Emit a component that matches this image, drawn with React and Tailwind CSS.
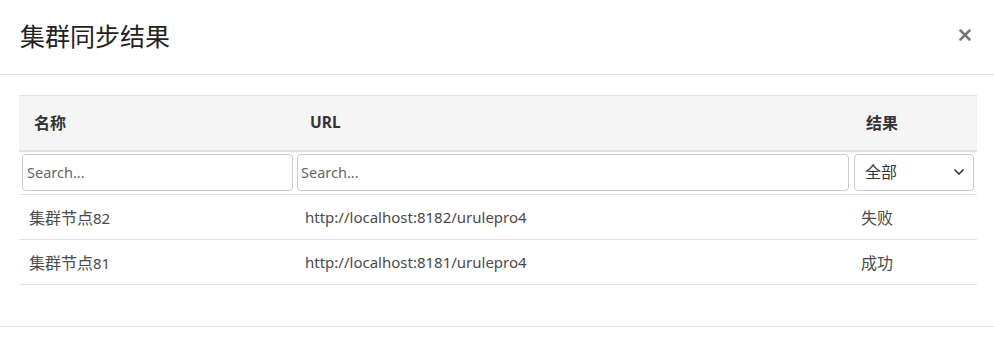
import { X, ChevronDown } from "lucide-react";

const rows = [
  { name: "集群节点", num: "82", url: "http://localhost:8182/urulepro4", result: "失败" },
  { name: "集群节点", num: "81", url: "http://localhost:8181/urulepro4", result: "成功" },
];

export default function App() {
  return (
    <div
      className="w-[994px] h-[353px] bg-white text-[#333] text-[15px] overflow-hidden"
      style={{ fontFamily: '"Noto Sans", "Noto Sans CJK SC", sans-serif' }}
    >
      {/* Header */}
      <div className="h-[75px] flex items-center justify-between pl-[20px] pr-[20px] border-b border-[#e5e5e5]">
        <h4 className="text-[25px] font-normal text-[#222] leading-none -mt-[1px]">集群同步结果</h4>
        <button className="text-[#777] -mt-[5px]">
          <X size={18} strokeWidth={3.4} />
        </button>
      </div>

      {/* Body */}
      <div className="px-[19px] pt-[20px] h-[252px] border-b border-[#e5e5e5]">
        <table className="w-[958px] table-fixed border-collapse">
          <colgroup>
            <col className="w-[276px]" />
            <col className="w-[556px]" />
            <col className="w-[126px]" />
          </colgroup>
          <thead>
            <tr className="bg-[#f5f5f5] border-t border-[#e3e3e3] border-b-2 border-b-[#dde3ea] h-[55px]">
              <th className="text-left font-bold pl-[15px] text-[#333] text-[16px]">名称</th>
              <th className="text-left font-bold pl-[15px] text-[#333] text-[15.5px]">URL</th>
              <th className="text-left font-bold pl-[15px] text-[#333] text-[16px]">结果</th>
            </tr>
            <tr className="border-b border-[#e3e3e3]">
              <th className="pl-[3px] pr-[2px] pt-[2px] pb-[3px] font-normal">
                <input
                  placeholder="Search..."
                  className="w-full h-[37px] border border-[#ccc] rounded-[4px] px-[4px] text-[14.5px] placeholder-[#666] outline-none"
                />
              </th>
              <th className="pl-[2px] pr-[2px] pt-[2px] pb-[3px] font-normal">
                <input
                  placeholder="Search..."
                  className="w-full h-[37px] border border-[#ccc] rounded-[4px] px-[3px] text-[14.5px] placeholder-[#666] outline-none"
                />
              </th>
              <th className="pl-[3px] pr-[3px] pt-[2px] pb-[3px] font-normal">
                <div className="h-[37px] border border-[#ccc] rounded-[4px] flex items-center justify-between pl-[10px] pr-[6px] text-[#333] text-[16px]">
                  <span>全部</span>
                  <ChevronDown size={16} strokeWidth={2.5} className="text-[#333]" />
                </div>
              </th>
            </tr>
          </thead>
          <tbody>
            {rows.map((r) => (
              <tr key={r.num} className="border-b border-[#e3e3e3] h-[45px]">
                <td className="pl-[10px] pt-[2px] text-[#4a4a4a]">
                  <span className="text-[16px]">{r.name}</span>
                  {r.num}
                </td>
                <td className="pl-[10px] pt-[2px] text-[#4a4a4a]">{r.url}</td>
                <td className="pl-[10px] pt-[2px] text-[#4a4a4a] text-[16px]">{r.result}</td>
              </tr>
            ))}
          </tbody>
        </table>
      </div>
    </div>
  );
}
